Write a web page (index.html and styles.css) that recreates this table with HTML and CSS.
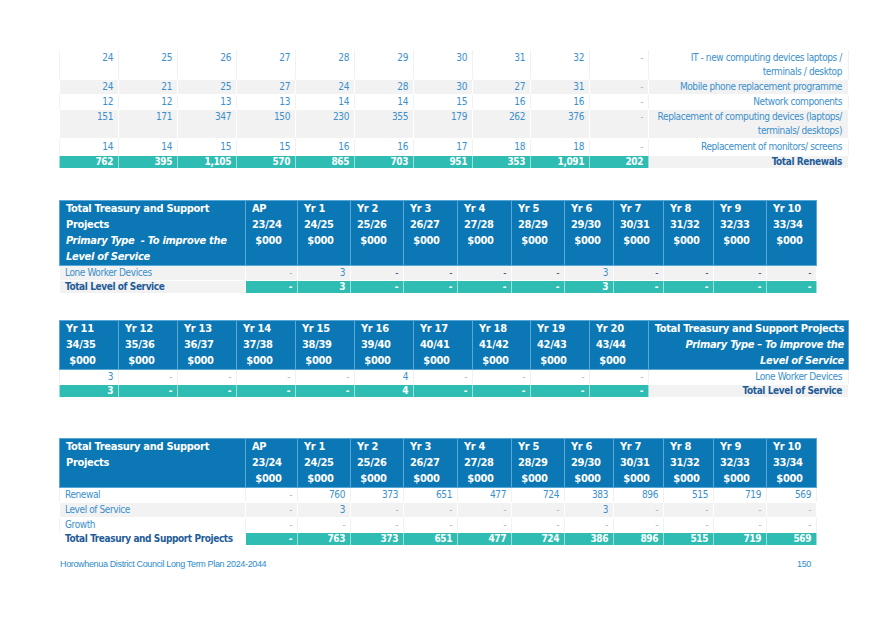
FILE: index.html
```html
<!DOCTYPE html>
<html lang="en">
<head>
<meta charset="utf-8">
<title>Treasury and Support Projects</title>
<link rel="stylesheet" href="styles.css">
</head>
<body>
<div class="page">

<table class="grid-a t1">
  <colgroup>
    <col class="c59"><col class="c59"><col class="c59"><col class="c59"><col class="c59"><col class="c59"><col class="c59"><col class="c58"><col class="c59"><col class="c59"><col class="cdesc">
  </colgroup>
  <tbody>
    <tr class="r2l"><td>24</td><td>25</td><td>26</td><td>27</td><td>28</td><td>29</td><td>30</td><td>31</td><td>32</td><td class="dash">-</td><td class="desc">IT - new computing devices laptops /<br>terminals / desktop</td></tr>
    <tr class="grey"><td>24</td><td>21</td><td>25</td><td>27</td><td>24</td><td>28</td><td>30</td><td>27</td><td>31</td><td class="dash">-</td><td class="desc">Mobile phone replacement programme</td></tr>
    <tr><td>12</td><td>12</td><td>13</td><td>13</td><td>14</td><td>14</td><td>15</td><td>16</td><td>16</td><td class="dash">-</td><td class="desc">Network components</td></tr>
    <tr class="grey"><td>151</td><td>171</td><td>347</td><td>150</td><td>230</td><td>355</td><td>179</td><td>262</td><td>376</td><td class="dash">-</td><td class="desc">Replacement of computing devices (laptops/<br>terminals/ desktops)</td></tr>
    <tr class="pad"><td>14</td><td>14</td><td>15</td><td>15</td><td>16</td><td>16</td><td>17</td><td>18</td><td>18</td><td class="dash">-</td><td class="desc">Replacement of monitors/ screens</td></tr>
    <tr class="total"><td>762</td><td>395</td><td>1,105</td><td>570</td><td>865</td><td>703</td><td>951</td><td>353</td><td>1,091</td><td>202</td><td class="desc strong">Total Renewals</td></tr>
  </tbody>
</table>

<table class="grid-b t2">
  <colgroup>
    <col class="cname"><col class="w52"><col class="w53"><col class="w53"><col class="w54"><col class="w54"><col class="w53"><col class="w49"><col class="w50"><col class="w50"><col class="w53"><col class="w50">
  </colgroup>
  <thead>
    <tr>
      <th class="hname">Total Treasury and Support<br>Projects<br><em>Primary Type&nbsp; - To improve the<br>Level of Service</em></th>
      <th><span class="yr"><span>AP</span><span>23/24</span><span class="usd">$000</span></span></th>
      <th><span class="yr"><span>Yr 1</span><span>24/25</span><span class="usd">$000</span></span></th>
      <th><span class="yr"><span>Yr 2</span><span>25/26</span><span class="usd">$000</span></span></th>
      <th><span class="yr"><span>Yr 3</span><span>26/27</span><span class="usd">$000</span></span></th>
      <th><span class="yr"><span>Yr 4</span><span>27/28</span><span class="usd">$000</span></span></th>
      <th><span class="yr"><span>Yr 5</span><span>28/29</span><span class="usd">$000</span></span></th>
      <th><span class="yr"><span>Yr 6</span><span>29/30</span><span class="usd">$000</span></span></th>
      <th><span class="yr"><span>Yr 7</span><span>30/31</span><span class="usd">$000</span></span></th>
      <th><span class="yr"><span>Yr 8</span><span>31/32</span><span class="usd">$000</span></span></th>
      <th><span class="yr"><span>Yr 9</span><span>32/33</span><span class="usd">$000</span></span></th>
      <th><span class="yr"><span>Yr 10</span><span>33/34</span><span class="usd">$000</span></span></th>
    </tr>
  </thead>
  <tbody>
    <tr class="grey"><td class="name">Lone Worker Devices</td><td class="dash">-</td><td>3</td><td class="dash dark">-</td><td class="dash dark">-</td><td class="dash dark">-</td><td class="dash dark">-</td><td>3</td><td class="dash dark">-</td><td class="dash dark">-</td><td class="dash dark">-</td><td class="dash dark">-</td></tr>
    <tr class="total"><td class="name strong">Total Level of Service</td><td>-</td><td>3</td><td>-</td><td>-</td><td>-</td><td>-</td><td>3</td><td>-</td><td>-</td><td>-</td><td>-</td></tr>
  </tbody>
</table>

<table class="grid-a t3">
  <colgroup>
    <col class="c59"><col class="c59"><col class="c59"><col class="c59"><col class="c59"><col class="c59"><col class="c59"><col class="c58"><col class="c59"><col class="c59"><col class="cdesc">
  </colgroup>
  <thead>
    <tr>
      <th><span class="yr"><span>Yr 11</span><span>34/35</span><span class="usd">$000</span></span></th>
      <th><span class="yr"><span>Yr 12</span><span>35/36</span><span class="usd">$000</span></span></th>
      <th><span class="yr"><span>Yr 13</span><span>36/37</span><span class="usd">$000</span></span></th>
      <th><span class="yr"><span>Yr 14</span><span>37/38</span><span class="usd">$000</span></span></th>
      <th><span class="yr"><span>Yr 15</span><span>38/39</span><span class="usd">$000</span></span></th>
      <th><span class="yr"><span>Yr 16</span><span>39/40</span><span class="usd">$000</span></span></th>
      <th><span class="yr"><span>Yr 17</span><span>40/41</span><span class="usd">$000</span></span></th>
      <th><span class="yr"><span>Yr 18</span><span>41/42</span><span class="usd">$000</span></span></th>
      <th><span class="yr"><span>Yr 19</span><span>42/43</span><span class="usd">$000</span></span></th>
      <th><span class="yr"><span>Yr 20</span><span>43/44</span><span class="usd">$000</span></span></th>
      <th class="hdesc">Total Treasury and Support Projects<br><em>Primary Type – To improve the<br>Level of Service</em></th>
    </tr>
  </thead>
  <tbody>
    <tr><td>3</td><td class="dash">-</td><td class="dash">-</td><td class="dash">-</td><td class="dash">-</td><td>4</td><td class="dash">-</td><td class="dash">-</td><td class="dash">-</td><td class="dash">-</td><td class="desc">Lone Worker Devices</td></tr>
    <tr class="total"><td>3</td><td>-</td><td>-</td><td>-</td><td>-</td><td>4</td><td>-</td><td>-</td><td>-</td><td>-</td><td class="desc strong">Total Level of Service</td></tr>
  </tbody>
</table>

<table class="grid-b t4">
  <colgroup>
    <col class="cname"><col class="w52"><col class="w53"><col class="w53"><col class="w54"><col class="w54"><col class="w53"><col class="w49"><col class="w50"><col class="w50"><col class="w53"><col class="w50">
  </colgroup>
  <thead>
    <tr>
      <th class="hname">Total Treasury and Support<br>Projects</th>
      <th><span class="yr"><span>AP</span><span>23/24</span><span class="usd">$000</span></span></th>
      <th><span class="yr"><span>Yr 1</span><span>24/25</span><span class="usd">$000</span></span></th>
      <th><span class="yr"><span>Yr 2</span><span>25/26</span><span class="usd">$000</span></span></th>
      <th><span class="yr"><span>Yr 3</span><span>26/27</span><span class="usd">$000</span></span></th>
      <th><span class="yr"><span>Yr 4</span><span>27/28</span><span class="usd">$000</span></span></th>
      <th><span class="yr"><span>Yr 5</span><span>28/29</span><span class="usd">$000</span></span></th>
      <th><span class="yr"><span>Yr 6</span><span>29/30</span><span class="usd">$000</span></span></th>
      <th><span class="yr"><span>Yr 7</span><span>30/31</span><span class="usd">$000</span></span></th>
      <th><span class="yr"><span>Yr 8</span><span>31/32</span><span class="usd">$000</span></span></th>
      <th><span class="yr"><span>Yr 9</span><span>32/33</span><span class="usd">$000</span></span></th>
      <th><span class="yr"><span>Yr 10</span><span>33/34</span><span class="usd">$000</span></span></th>
    </tr>
  </thead>
  <tbody>
    <tr><td class="name">Renewal</td><td class="dash">-</td><td>760</td><td>373</td><td>651</td><td>477</td><td>724</td><td>383</td><td>896</td><td>515</td><td>719</td><td>569</td></tr>
    <tr class="grey"><td class="name">Level of Service</td><td class="dash">-</td><td>3</td><td class="dash">-</td><td class="dash">-</td><td class="dash">-</td><td class="dash">-</td><td>3</td><td class="dash">-</td><td class="dash">-</td><td class="dash">-</td><td class="dash">-</td></tr>
    <tr><td class="name">Growth</td><td class="dash">-</td><td class="dash">-</td><td class="dash">-</td><td class="dash">-</td><td class="dash">-</td><td class="dash">-</td><td class="dash">-</td><td class="dash">-</td><td class="dash">-</td><td class="dash">-</td><td class="dash">-</td></tr>
    <tr class="total"><td class="name strong plain">Total Treasury and Support Projects</td><td>-</td><td>763</td><td>373</td><td>651</td><td>477</td><td>724</td><td>386</td><td>896</td><td>515</td><td>719</td><td>569</td></tr>
  </tbody>
</table>

<footer class="foot">
  <span>Horowhenua District Council Long Term Plan 2024-2044</span>
  <span>150</span>
</footer>

</div>
</body>
</html>
```

FILE: styles.css
```css
* { box-sizing: border-box; }

body {
  margin: 0;
  background: #ffffff;
  font-family: "DejaVu Sans Condensed", "DejaVu Sans", sans-serif;
  font-stretch: condensed;
  color: #3a8fca;
}

.page {
  padding: 50px 0 0 59px;
  width: 874px;
}

table {
  border-collapse: collapse;
  table-layout: fixed;
}

.grid-a { width: 789px; }
.grid-b { width: 757px; }

.c59 { width: 59px; }
.c58 { width: 58px; }
.cdesc { width: 200px; }
.cname { width: 186px; }
.w49 { width: 49px; }
.w50 { width: 50px; }
.w52 { width: 52px; }
.w53 { width: 53px; }
.w54 { width: 54px; }

td {
  padding: 0 5px 0 4px;
  font-size: 10px;
  letter-spacing: -0.4px;
  line-height: 14px;
  vertical-align: top;
  text-align: right;
  color: #3b8fcb;
  border: 1px solid #ffffff;
  border-left-color: #eef2f5;
  border-right-color: #eef2f5;
  white-space: nowrap;
}

tr.grey td { background: #f2f2f2; border-color: #ffffff; }
tr.pad td { padding-top: 1px; padding-bottom: 1px; }

tr.total td {
  background: #2fbdb3;
  color: #ffffff;
  font-weight: bold;
  border: 1px solid #ffffff;
  border-left-color: #9edfd9;
  border-right-color: #9edfd9;
  line-height: 12px;
}

td.dash { color: #9dbcd6; }
td.dash.dark { color: #2a4f7a; }

td.desc { color: #3b8fcb; padding-right: 6px; }
tr.total td.desc,
tr.total td.name {
  background: #f2f2f2;
  color: #1f5c98;
  border-color: #ffffff;
}
tr.total td.name.plain { background: #ffffff; }

td.name { text-align: left; padding-left: 5px; color: #3b8fcb; }
.strong { font-weight: bold; }

.t1 { margin-bottom: 31px; }
.t2 { margin-bottom: 26px; }
.t3 { margin-bottom: 40px; }
.t4 { margin-bottom: 13px; }

th {
  background: #0b77b4;
  color: #ffffff;
  font-weight: bold;
  font-size: 11px;
  letter-spacing: -0.3px;
  line-height: 16px;
  text-align: left;
  vertical-align: top;
  padding: 0 3px 0 6px;
  border: 1px solid #5aa8d5;
  white-space: nowrap;
}

th em { font-style: italic; }

.hname { padding-left: 6px; }
.hdesc { text-align: right; padding-right: 4px; padding-left: 2px; }

.yr {
  display: inline-flex;
  flex-direction: column;
}
.yr .usd { text-align: right; }

.foot {
  display: flex;
  justify-content: space-between;
  width: 752px;
  padding-left: 1px;
  font-family: "Liberation Sans", Arial, sans-serif;
  font-stretch: normal;
  font-size: 9px;
  letter-spacing: -0.35px;
  color: #2e8ccc;
}
```
